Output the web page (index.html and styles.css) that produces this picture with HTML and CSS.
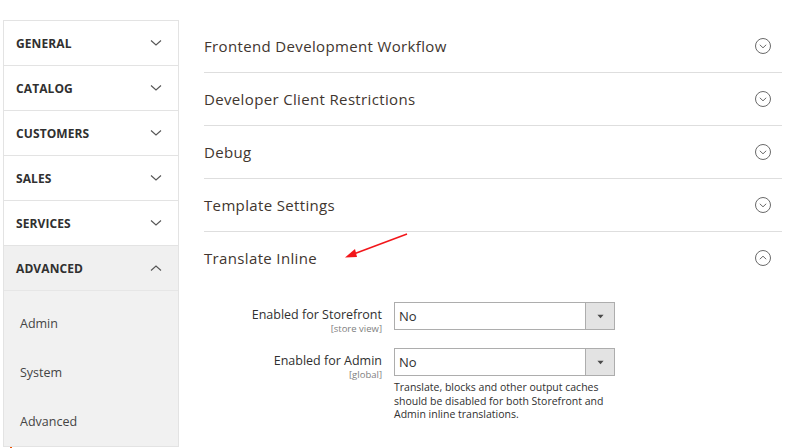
FILE: index.html
```html
<!DOCTYPE html>
<html>
<head>
<meta charset="utf-8">
<link rel="stylesheet" href="styles.css">
</head>
<body>
<div class="page">
  <aside class="sidebar">
    <div class="tab"><span>GENERAL</span><svg class="chev" viewBox="0 0 12 8"><path d="M1 1.5 L6 6 L11 1.5"/></svg></div>
    <div class="tab"><span>CATALOG</span><svg class="chev" viewBox="0 0 12 8"><path d="M1 1.5 L6 6 L11 1.5"/></svg></div>
    <div class="tab"><span>CUSTOMERS</span><svg class="chev" viewBox="0 0 12 8"><path d="M1 1.5 L6 6 L11 1.5"/></svg></div>
    <div class="tab"><span>SALES</span><svg class="chev" viewBox="0 0 12 8"><path d="M1 1.5 L6 6 L11 1.5"/></svg></div>
    <div class="tab"><span>SERVICES</span><svg class="chev" viewBox="0 0 12 8"><path d="M1 1.5 L6 6 L11 1.5"/></svg></div>
    <div class="group">
      <div class="tab open"><span>ADVANCED</span><svg class="chev" viewBox="0 0 12 8"><path d="M1 6.5 L6 2 L11 6.5"/></svg></div>
      <div class="subs">
        <div class="sub">Admin</div>
        <div class="sub">System</div>
        <div class="sub">Advanced</div>
      </div>
    </div>
    <div class="mark"></div>
  </aside>
  <main class="content">
    <div class="section"><h3>Frontend Development Workflow</h3><svg class="circ" viewBox="0 0 18 18"><circle cx="9" cy="9" r="7.5"/><path d="M5.8 7.8 L9 10.8 L12.2 7.8"/></svg></div>
    <div class="section"><h3>Developer Client Restrictions</h3><svg class="circ" viewBox="0 0 18 18"><circle cx="9" cy="9" r="7.5"/><path d="M5.8 7.8 L9 10.8 L12.2 7.8"/></svg></div>
    <div class="section"><h3>Debug</h3><svg class="circ" viewBox="0 0 18 18"><circle cx="9" cy="9" r="7.5"/><path d="M5.8 7.8 L9 10.8 L12.2 7.8"/></svg></div>
    <div class="section"><h3>Template Settings</h3><svg class="circ" viewBox="0 0 18 18"><circle cx="9" cy="9" r="7.5"/><path d="M5.8 7.8 L9 10.8 L12.2 7.8"/></svg></div>
    <div class="section last"><h3>Translate Inline</h3><svg class="circ" viewBox="0 0 18 18"><circle cx="9" cy="9" r="7.5"/><path d="M5.8 10.2 L9 7.2 L12.2 10.2"/></svg></div>
    <div class="form">
      <div class="row">
        <div class="label"><div class="lt">Enabled for Storefront</div><div class="scope">[store view]</div></div>
        <div class="control">
          <div class="select"><span class="val">No</span><span class="btn"><svg viewBox="0 0 8 5"><path d="M0.5 0.5 L7.5 0.5 L4 4.5 Z"/></svg></span></div>
        </div>
      </div>
      <div class="row">
        <div class="label"><div class="lt">Enabled for Admin</div><div class="scope">[global]</div></div>
        <div class="control">
          <div class="select"><span class="val">No</span><span class="btn"><svg viewBox="0 0 8 5"><path d="M0.5 0.5 L7.5 0.5 L4 4.5 Z"/></svg></span></div>
          <p class="note">Translate, blocks and other output caches should be disabled for both Storefront and Admin inline translations.</p>
        </div>
      </div>
    </div>
  </main>
  <svg class="arrow" viewBox="0 0 70 30"><line x1="64" y1="2" x2="8" y2="23"/><path d="M2 25.5 L12 17 L14 25 Z"/></svg>
</div>
</body>
</html>
```
FILE: styles.css
```css
* { box-sizing: border-box; }
html, body { margin: 0; padding: 0; background: #fff; }
body { font-family: "Open Sans", "DejaVu Sans", sans-serif; color: #333; width: 800px; height: 448px; overflow: hidden; }
.page { position: relative; display: flex; padding: 20px 0 0 3px; gap: 25px; }
.sidebar { width: 176px; flex: none; border: 1px solid #e3e3e3; border-bottom: none; position: relative; }
.tab { height: 45px; display: flex; align-items: center; justify-content: space-between; padding: 0 16px 0 12px; border-bottom: 1px solid #e3e3e3; font-size: 12px; font-weight: 700; color: #303030; letter-spacing: 0.1px; }
.tab span { padding-top: 1px; }
.chev { width: 12px; height: 8px; fill: none; stroke: #555; stroke-width: 1.1; }
.group { background: #f1f1f1; border-bottom: 1px solid #e3e3e3; }
.tab.open { background: #f0f0f0; border-bottom: 1px solid #e6e6e6; }
.subs { padding: 8px 0 0; }
.sub { height: 49px; display: flex; align-items: center; padding-left: 16px; font-size: 12.5px; color: #444; }
.mark { position: absolute; left: 6px; bottom: -4px; width: 2px; height: 4px; background: #eb5202; }
.content { width: 578px; flex: none; }
.section { height: 53px; display: flex; align-items: center; justify-content: space-between; border-bottom: 1px solid #dedede; padding: 0 10px 0 0; }
.section.last { border-bottom: none; height: 52px; }
.section h3 { margin: 0; font-size: 15px; font-weight: 500; color: #41362f; letter-spacing: 0.35px; }
.circ { width: 18px; height: 18px; fill: none; stroke: #6a6a6a; stroke-width: 1; }
.form { padding-top: 18px; }
.row { display: flex; gap: 12px; margin-bottom: 14px; }
.label { width: 178px; text-align: right; padding-top: 5px; }
.lt { font-size: 12.5px; font-weight: 500; color: #303030; line-height: 16px; }
.scope { font-size: 9.5px; color: #808080; line-height: 11px; }
.control { width: 221px; }
.select { height: 28px; border: 1px solid #adadad; display: flex; align-items: stretch; background: #fff; }
.val { flex: 1; padding-left: 4px; font-size: 13px; color: #303030; display: flex; align-items: center; }
.btn { width: 29px; background: #e3e3e3; border-left: 1px solid #adadad; display: flex; align-items: center; justify-content: center; }
.btn svg { width: 7px; height: 5px; fill: #4a4a4a; }
.note { margin: 5px 0 0; font-size: 10.5px; line-height: 13.5px; color: #303030; }
.arrow { position: absolute; left: 343px; top: 232px; width: 70px; height: 30px; overflow: visible; }
.arrow line { stroke: #f2161a; stroke-width: 1.6; }
.arrow path { fill: #f2161a; }
```
